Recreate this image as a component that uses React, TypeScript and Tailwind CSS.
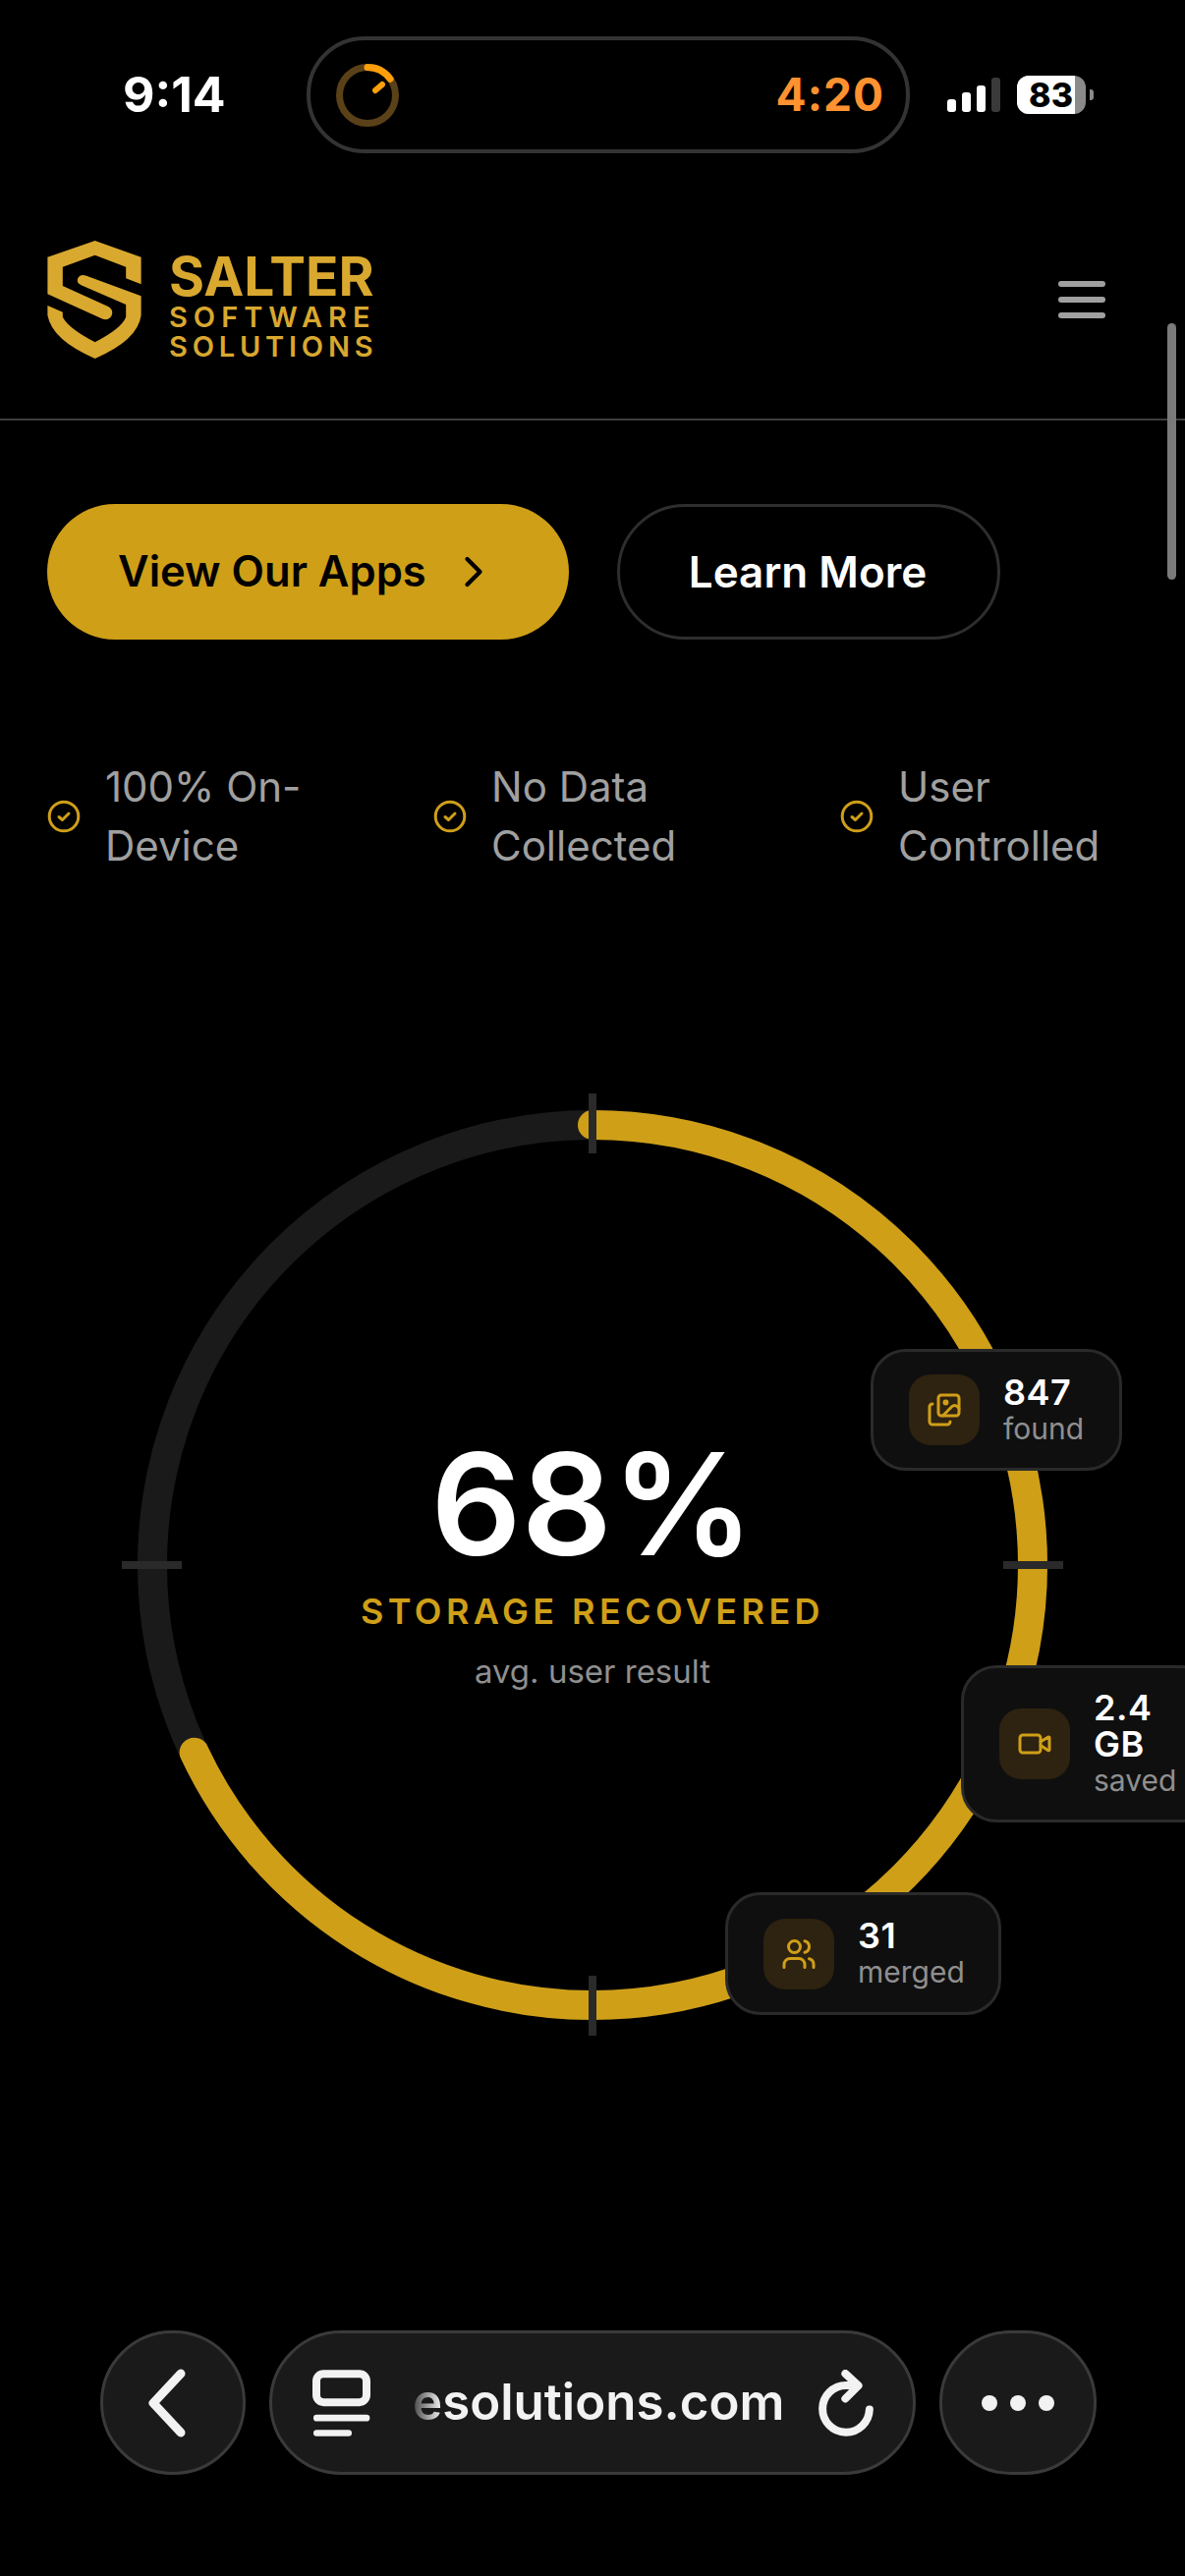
import { ChevronRight, Images, Users, Video } from "lucide-react";
import type { ReactNode } from "react";

const checks = [
  { lines: ["100% On-", "Device"], width: "w-[393px]" },
  { lines: ["No Data", "Collected"], width: "w-[414px]" },
  { lines: ["User", "Controlled"], width: "w-[262px]" },
];

const StatusBar = () => (
  <div className="flex h-[156px] items-end pl-[125px]">
    <div className="flex h-[119px] w-[187px] items-center text-[50px] font-bold text-white">9:14</div>
    <div className="flex h-[119px] w-[614px] items-center justify-between rounded-[59px] border-4 border-[#333333] pr-[22px] pl-[26px]">
      <svg width="64" height="64" viewBox="0 0 64 64">
        <circle cx="32" cy="32" r="28.5" fill="none" stroke="#5b4118" strokeWidth="7" />
        <circle
          cx="32"
          cy="32"
          r="28.5"
          fill="none"
          stroke="#ff9f0a"
          strokeWidth="7"
          strokeLinecap="round"
          pathLength={100}
          strokeDasharray="15 100"
          transform="rotate(-90 32 32)"
        />
        <path d="M40 27 L47 21" stroke="#ff9f0a" strokeWidth="6" strokeLinecap="round" />
      </svg>
      <span className="text-[46px] font-bold tracking-[1px] text-[#ff9230]">4:20</span>
    </div>
    <div className="ml-[38px] flex h-[119px] items-center">
      <div className="flex items-end gap-[6px]">
        <div className="h-[13px] w-[9px] rounded-[3px] bg-white" />
        <div className="h-[20px] w-[9px] rounded-[3px] bg-white" />
        <div className="h-[27px] w-[9px] rounded-[3px] bg-white" />
        <div className="h-[35px] w-[9px] rounded-[3px] bg-[#3a3a3a]" />
      </div>
      <div className="relative ml-[17px] flex h-[39px] w-[70px] overflow-hidden rounded-[12px] bg-[#8a8a8a]">
        <div className="flex w-[59px] items-center justify-end bg-white pr-[2px] text-[34px] font-extrabold text-black">83</div>
      </div>
      <div className="ml-[4px] h-[11px] w-[4px] rounded-r-[3px] bg-[#8a8a8a]" />
    </div>
  </div>
);

const Logo = () => (
  <div className="flex items-center gap-[28px]">
    <svg width="96" height="120" viewBox="26 18 284 358" fill="#d9a82f">
      <path d="M170 18 L310 68 V150 L264 132 V98 L170 62 L72 98 V155 L210 218 Q228 228 220 246 Q210 262 192 255 L26 180 V68 Z" />
      <path d="M142 124 L310 186 V245 Q300 320 170 376 Q40 320 26 245 V215 L72 235 V250 Q90 285 170 326 Q250 285 264 250 V212 L128 153 Q112 145 118 132 Q126 118 142 124 Z" />
    </svg>
    <div className="mt-[14px] flex flex-col text-[#d9a82f]">
      <span className="text-[55px] leading-[50px] font-bold">SALTER</span>
      <span className="mt-[2px] text-[29px] leading-[30px] font-semibold tracking-[6px]">SOFTWARE</span>
      <span className="text-[29px] leading-[30px] font-semibold tracking-[4.8px]">SOLUTIONS</span>
    </div>
  </div>
);

const CheckIcon = () => (
  <svg width="34" height="34" viewBox="0 0 34 34" fill="none" stroke="#cf9f18" className="shrink-0">
    <circle cx="17" cy="17" r="14.8" strokeWidth="3" />
    <path d="M12 17.5 L15.5 20.5 L22 14" strokeWidth="3" strokeLinecap="round" strokeLinejoin="round" />
  </svg>
);

const StatCard = ({
  icon,
  value,
  label,
  className,
}: {
  icon: ReactNode;
  value: ReactNode;
  label: string;
  className: string;
}) => (
  <div className={`absolute flex items-center gap-[24px] rounded-[36px] border-[3px] border-[#2a2a2a] bg-[#0f0f0f] pr-[36px] pl-[36px] ${className}`}>
    <div className="flex h-[72px] w-[72px] shrink-0 items-center justify-center rounded-[22px] bg-[#2e2210] text-[#cf9f18]">
      {icon}
    </div>
    <div className="flex flex-col">
      <span className="text-[36px] leading-[37px] font-semibold tracking-[0.5px] text-white">{value}</span>
      <span className="text-[30px] leading-[36px] text-[#8f8f8f]">{label}</span>
    </div>
  </div>
);

const Gauge = () => (
  <div className="relative ml-[139px] flex h-[928px] w-[928px] flex-col items-center pt-[318px]">
    <svg width="928" height="928" viewBox="0 0 928 928" className="absolute top-0 left-0 overflow-visible">
      <circle cx="464" cy="464" r="448" fill="none" stroke="#1a1a1a" strokeWidth="30" />
      <circle
        cx="464"
        cy="464"
        r="448"
        fill="none"
        stroke="#cf9f18"
        strokeWidth="30"
        strokeLinecap="round"
        pathLength={100}
        strokeDasharray="68 100"
        transform="rotate(-90 464 464)"
      />
      <g stroke="#2a2a2a" strokeWidth="8">
        <path d="M464 -16 V45" />
        <path d="M464 882 V943" />
        <path d="M-15 464 H46" />
        <path d="M882 464 H943" />
      </g>
    </svg>
    <span className="relative text-[144px] leading-[168px] font-semibold text-white">68%</span>
    <span className="relative mt-[2px] text-[36px] leading-[46px] font-semibold tracking-[4.4px] text-[#cf9f18]">STORAGE RECOVERED</span>
    <span className="relative mt-[16px] text-[33px] leading-[44px] text-[#8f8f8f]">avg. user result</span>
    <StatCard
      className="top-[244px] left-[747px] h-[124px] w-[256px]"
      icon={<Images size={36} strokeWidth={2} />}
      value="847"
      label="found"
    />
    <StatCard
      className="top-[566px] left-[839px] h-[160px] w-[260px]"
      icon={<Video size={36} strokeWidth={2} />}
      value={<>2.4<br />GB</>}
      label="saved"
    />
    <StatCard
      className="top-[797px] left-[599px] h-[125px] w-[281px]"
      icon={<Users size={36} strokeWidth={2} />}
      value="31"
      label="merged"
    />
  </div>
);

const BrowserBar = () => (
  <div className="mt-[315px] flex items-center gap-[24px] pl-[102px] text-[#f2f2f2]">
    <button className="flex h-[147px] w-[148px] items-center justify-center rounded-full border-[3px] border-[#3a3a3a] bg-[#1a1a1a]">
      <svg width="40" height="70" viewBox="0 0 40 70" fill="none" stroke="#f2f2f2" strokeWidth="9" strokeLinecap="round" strokeLinejoin="round" className="mr-[12px]">
        <path d="M34 5 L6 35 L34 65" />
      </svg>
    </button>
    <div className="relative flex h-[147px] w-[658px] items-center rounded-[74px] border-[3px] border-[#3a3a3a] bg-[#1a1a1a] pr-[40px] pl-[41px]">
      <svg width="59" height="68" viewBox="55 70 177 203" fill="none" stroke="#f2f2f2" strokeLinecap="round" className="shrink-0">
        <rect x="67" y="82" width="153" height="87" rx="22" strokeWidth="24" />
        <path d="M68 217 H220" strokeWidth="20" />
        <path d="M68 263 H165" strokeWidth="20" />
      </svg>
      <span className="ml-[43px] text-[51px] font-semibold">esolutions.com</span>
      <div className="absolute top-[40px] left-[136px] h-[60px] w-[36px] bg-gradient-to-r from-[#1a1a1a] to-transparent" />
      <svg width="56" height="68" viewBox="96 53 168 205" fill="none" stroke="#f2f2f2" strokeWidth="24" strokeLinecap="round" strokeLinejoin="round" className="ml-auto shrink-0">
        <path d="M252 175 A72 72 0 1 1 180 101 H215" />
        <path d="M178 65 L218 102 L178 142" />
      </svg>
    </div>
    <button className="flex h-[147px] w-[160px] items-center justify-center gap-[13px] rounded-full border-[3px] border-[#3a3a3a] bg-[#1a1a1a]">
      <div className="h-[16px] w-[16px] rounded-full bg-[#f2f2f2]" />
      <div className="h-[16px] w-[16px] rounded-full bg-[#f2f2f2]" />
      <div className="h-[16px] w-[16px] rounded-full bg-[#f2f2f2]" />
    </button>
  </div>
);

export default function App() {
  return (
    <div className="relative h-[2622px] w-full overflow-hidden bg-black font-['Inter',sans-serif]">
      <StatusBar />
      <header className="flex h-[272px] items-center justify-between border-b-2 border-[#3d3d3d] pt-[28px] pr-[81px] pl-[48px]">
        <Logo />
        <div className="flex flex-col gap-[10px]">
          <div className="h-[6px] w-[48px] rounded-full bg-[#a0a0a0]" />
          <div className="h-[6px] w-[48px] rounded-full bg-[#a0a0a0]" />
          <div className="h-[6px] w-[48px] rounded-full bg-[#a0a0a0]" />
        </div>
      </header>
      <div className="absolute top-[329px] right-[9px] h-[261px] w-[9px] rounded-full bg-[#7a7a7a]" />
      <div className="mt-[85px] flex gap-[49px] pl-[48px]">
        <button className="flex h-[138px] w-[531px] items-center rounded-full bg-[#cf9f18] pl-[72px] text-[43.5px] font-semibold text-black">
          View Our Apps
          <ChevronRight size={52} strokeWidth={2} className="ml-[22px]" />
        </button>
        <button className="flex h-[138px] w-[390px] items-center justify-center rounded-full border-[3px] border-[#2e2e2e] pr-[2px] text-[44px] font-semibold text-white">
          Learn More
        </button>
      </div>
      <div className="mt-[120px] flex pl-[48px]">
        {checks.map((item) => (
          <div key={item.lines[0]} className={`flex items-center gap-[25px] ${item.width}`}>
            <CheckIcon />
            <div className="text-[42px] leading-[60px] text-[#a0a0a0]">
              {item.lines[0]}
              <br />
              {item.lines[1]}
            </div>
          </div>
        ))}
      </div>
      <div className="mt-[238px]">
        <Gauge />
      </div>
      <BrowserBar />
    </div>
  );
}
